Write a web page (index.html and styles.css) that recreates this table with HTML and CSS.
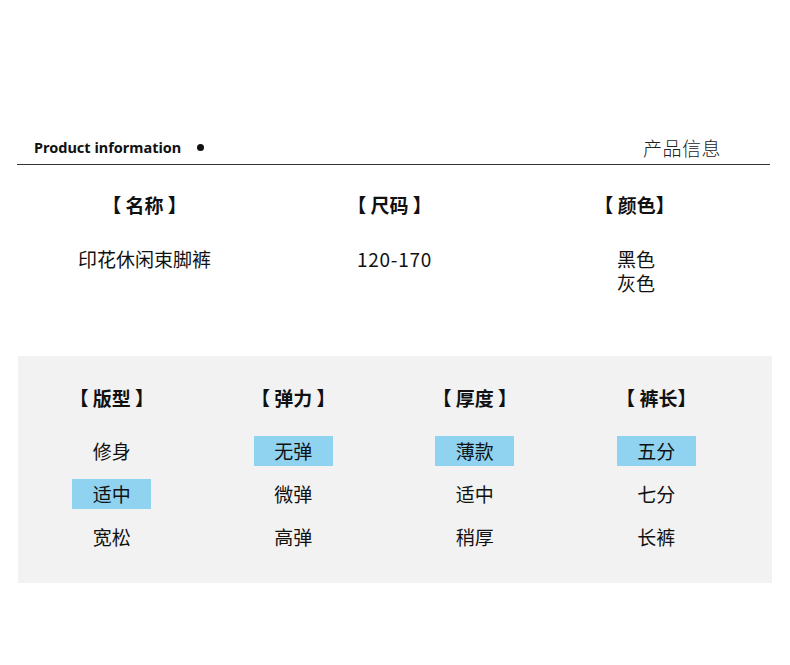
FILE: index.html
```html
<!DOCTYPE html>
<html lang="zh-CN">
<head>
<meta charset="utf-8">
<title>产品信息</title>
<link rel="stylesheet" href="styles.css">
</head>
<body>
<div class="page">
  <header class="head">
    <div class="head-row">
      <div class="head-left">
        <span class="head-en">Product information</span>
        <span class="dot"></span>
      </div>
      <span class="head-cn">产品信息</span>
    </div>
  </header>

  <section class="basic">
    <div class="basic-col">
      <div class="title">【 名称 】</div>
      <div class="value">印花休闲束脚裤</div>
    </div>
    <div class="basic-col">
      <div class="title">【 尺码 】</div>
      <div class="value num">120-170</div>
    </div>
    <div class="basic-col col3">
      <div class="title">【 颜色】</div>
      <div class="value">黑色<br>灰色</div>
    </div>
  </section>

  <section class="panel">
    <div class="attr">
      <div class="title">【 版型 】</div>
      <ul class="opts">
        <li>修身</li>
        <li class="on">适中</li>
        <li>宽松</li>
      </ul>
    </div>
    <div class="attr">
      <div class="title">【 弹力 】</div>
      <ul class="opts">
        <li class="on">无弹</li>
        <li>微弹</li>
        <li>高弹</li>
      </ul>
    </div>
    <div class="attr">
      <div class="title">【 厚度 】</div>
      <ul class="opts">
        <li class="on">薄款</li>
        <li>适中</li>
        <li>稍厚</li>
      </ul>
    </div>
    <div class="attr">
      <div class="title">【 裤长】</div>
      <ul class="opts">
        <li class="on">五分</li>
        <li>七分</li>
        <li>长裤</li>
      </ul>
    </div>
  </section>
</div>
</body>
</html>
```

FILE: styles.css
```css
* { box-sizing: border-box; }

html, body {
  margin: 0;
  padding: 0;
  background: #ffffff;
}

body {
  font-family: "Noto Sans CJK SC", "Noto Sans", sans-serif;
  color: #111111;
}

.page {
  width: 790px;
  height: 665px;
  overflow: hidden;
}

.head {
  margin: 0 20px 0 17px;
  padding-top: 133px;
  padding-bottom: 3px;
  border-bottom: 1.5px solid #333333;
}

.head-row {
  height: 28px;
  display: flex;
  align-items: center;
  justify-content: space-between;
  padding-left: 17px;
  padding-right: 49px;
}

.head-left {
  display: flex;
  align-items: center;
  gap: 16px;
}

.head-en {
  font-family: "Noto Sans", "Open Sans", sans-serif;
  font-weight: 700;
  font-size: 14.5px;
  color: #111111;
}

.dot {
  width: 7px;
  height: 7px;
  border-radius: 50%;
  background: #111111;
}

.head-cn {
  font-size: 19px;
  font-weight: 300;
  color: #222222;
  letter-spacing: 0.5px;
}

.basic {
  display: grid;
  grid-template-columns: 245px 245px 245px;
  margin-left: 22px;
  padding-top: 26px;
}

.basic-col {
  display: flex;
  flex-direction: column;
  align-items: center;
}

.title {
  font-size: 19px;
  font-weight: 700;
  line-height: 28px;
  height: 28px;
  white-space: pre;
}

.basic .value {
  margin-top: 28px;
  font-size: 19px;
  line-height: 24px;
  text-align: center;
}

.basic .value.num {
  letter-spacing: 0.7px;
  padding-left: 10px;
}

.basic .col3 .value {
  padding-left: 3px;
}

.panel {
  margin: 60.5px 18px 0 18px;
  width: 754px;
  height: 227px;
  background: #f2f2f2;
  display: grid;
  grid-template-columns: repeat(4, 181.5px);
  padding-left: 3px;
  padding-top: 28px;
}

.attr {
  display: flex;
  flex-direction: column;
  align-items: center;
}

.opts {
  list-style: none;
  margin: 24px 0 0 0;
  padding: 0;
  display: flex;
  flex-direction: column;
  align-items: center;
  gap: 13px;
}

.opts li {
  width: 79px;
  height: 30px;
  line-height: 30px;
  text-align: center;
  font-size: 19px;
}

.opts li.on {
  background: #8fd3f0;
}
```
